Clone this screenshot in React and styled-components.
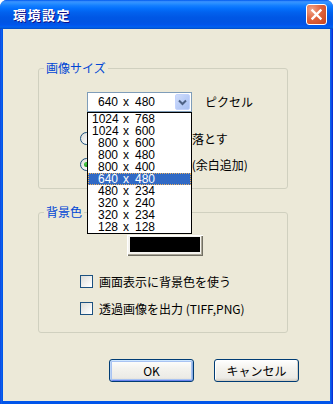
import React from 'react'
import styled, { createGlobalStyle } from 'styled-components'

const GlobalStyle = createGlobalStyle`
  html, body {
    margin: 0;
    padding: 0;
    background: #ffffff;
  }
  body {
    font-family: 'Noto Sans CJK JP', 'Liberation Sans', sans-serif;
    font-size: 12px;
  }
`

const sizes = [
  ['1024', '768'],
  ['1024', '600'],
  ['800', '600'],
  ['800', '480'],
  ['800', '400'],
  ['640', '480'],
  ['480', '234'],
  ['320', '240'],
  ['320', '234'],
  ['128', '128'],
]

const App = () => {
  return (
    <>
      <GlobalStyle />
      <Window>
        <TitleBar>
          <Title>環境設定</Title>
          <CloseButton>
            <svg width="13" height="13" viewBox="0 0 13 13">
              <path d="M2.5 2.5 L10.5 10.5 M10.5 2.5 L2.5 10.5" stroke="#fff" strokeWidth="2.4" strokeLinecap="square" />
            </svg>
          </CloseButton>
        </TitleBar>
        <Client>
          <Group>
            <Legend>画像サイズ</Legend>
            <GroupBody $top={18} $bottom={17}>
              <ComboRow>
                <ComboWrap>
                  <Combo>
                    <SizeText>
                      <Num1>640</Num1><Times>x</Times><Num2>480</Num2>
                    </SizeText>
                    <ArrowButton>
                      <svg width="9" height="7" viewBox="0 0 9 7">
                        <path d="M1 1.5 L4.5 5 L8 1.5" stroke="#4D6185" strokeWidth="2" fill="none" />
                      </svg>
                    </ArrowButton>
                  </Combo>
                  <DropList>
                    {sizes.map(([w, h], i) => (
                      <DropItem key={i} $selected={i === 5}>
                        <Num1>{w}</Num1><Times>x</Times><Num2>{h}</Num2>
                      </DropItem>
                    ))}
                  </DropList>
                </ComboWrap>
                <Unit>ピクセル</Unit>
              </ComboRow>
              <OptionRow $mt={20} $gap={3}>
                <Radio />
                <OptionLabel>余分な部分を切り落とす</OptionLabel>
              </OptionRow>
              <OptionRow $mt={13} $gap={3}>
                <Radio $checked />
                <OptionLabel>縮小して全体表示(余白追加)</OptionLabel>
              </OptionRow>
            </GroupBody>
          </Group>

          <Group $mt={17}>
            <Legend>背景色</Legend>
            <GroupBody $top={17} $bottom={17}>
              <SwatchRow>
                <Swatch>
                  <SwatchColor $color="#000000" />
                </Swatch>
              </SwatchRow>
              <OptionRow $mt={19} $gap={6}>
                <Check />
                <OptionLabel>画面表示に背景色を使う</OptionLabel>
              </OptionRow>
              <OptionRow $mt={14} $gap={6}>
                <Check />
                <OptionLabel>透過画像を出力 (TIFF,PNG)</OptionLabel>
              </OptionRow>
            </GroupBody>
          </Group>

          <ButtonRow>
            <PushButton $default>OK</PushButton>
            <PushButton>キャンセル</PushButton>
          </ButtonRow>
        </Client>
      </Window>
    </>
  )
}

const Window = styled.div`
  width: 333px;
  height: 404px;
  box-sizing: border-box;
  display: flex;
  flex-direction: column;
  border-radius: 7px 7px 0 0;
  overflow: hidden;
  background: linear-gradient(to right, #0831D9 0px, #166AEE 1px, #0055EA 2px, #0055EA 330px, #166AEE 331px, #0831D9 332px);
`

const TitleBar = styled.div`
  height: 29px;
  flex-shrink: 0;
  display: flex;
  align-items: center;
  padding: 0 6px 0 13px;
  background: linear-gradient(to bottom,
    #0058EE 0%, #3A93FF 6%, #288EFF 12%, #127DFF 20%, #036FFC 30%,
    #0262EE 42%, #0057E5 60%, #0054E3 76%, #0055EB 86%,
    #005BF5 90%, #0262E8 94%, #0049C8 100%);
`

const Title = styled.div`
  flex: 1;
  color: #ffffff;
  font-weight: 700;
  font-size: 13px;
  line-height: 14px;
  letter-spacing: 1.5px;
  text-shadow: 1px 1px #0F1089;
`

const CloseButton = styled.div`
  width: 21px;
  height: 21px;
  box-sizing: border-box;
  border: 1px solid #ffffff;
  border-radius: 3px;
  display: flex;
  align-items: center;
  justify-content: center;
  background: radial-gradient(circle at 25% 25%, #F0A58A 0%, #E0643E 45%, #C8431B 100%);
`

const Client = styled.div`
  flex: 1;
  margin: 0 3px 3px 3px;
  background: #ECE9D8;
  padding-top: 33px;
  display: flex;
  flex-direction: column;
`

const Group = styled.fieldset`
  margin: ${p => p.$mt || 0}px 0 0 35px;
  width: 250px;
  box-sizing: border-box;
  padding: 0;
  border: 1px solid #D0D0BF;
  border-radius: 3px;
  min-width: 0;
`

const Legend = styled.legend`
  margin-left: 5px;
  padding: 0 2px;
  color: #0046D5;
  font-size: 12px;
  line-height: 12px;
`

const GroupBody = styled.div`
  padding: ${p => p.$top}px 0 ${p => p.$bottom}px 41px;
  display: flex;
  flex-direction: column;
`

const ComboRow = styled.div`
  display: flex;
  align-items: center;
  margin-left: 7px;
  gap: 13px;
`

const ComboWrap = styled.div`
  position: relative;
  width: 105px;
  height: 20px;
`

const Combo = styled.div`
  width: 105px;
  height: 20px;
  box-sizing: border-box;
  border: 1px solid #7F9DB9;
  background: #ffffff;
  display: flex;
  align-items: center;
`

const SizeText = styled.div`
  flex: 1;
  display: flex;
  padding-left: 4px;
  font-family: 'Liberation Sans', 'Noto Sans CJK JP', sans-serif;
  font-size: 12px;
  line-height: 12px;
  color: #000000;
`

const Num1 = styled.span`
  display: inline-block;
  width: 26px;
  text-align: right;
`

const Times = styled.span`
  display: inline-block;
  width: 16px;
  text-align: center;
`

const Num2 = styled.span`
  display: inline-block;
  width: 21px;
  text-align: right;
`

const ArrowButton = styled.div`
  width: 15px;
  height: 16px;
  margin-right: 1px;
  box-sizing: border-box;
  border: 1px solid #C3D3FD;
  border-radius: 2px;
  background: linear-gradient(135deg, #D0DDFB 0%, #BACDF7 50%, #A9C0F3 100%);
  display: flex;
  align-items: center;
  justify-content: center;
`

const DropList = styled.div`
  position: absolute;
  left: 0;
  top: 100%;
  z-index: 10;
  width: 105px;
  box-sizing: border-box;
  border: 1px solid #000000;
  background: #ffffff;
  display: flex;
  flex-direction: column;
`

const DropItem = styled.div`
  height: 12px;
  box-sizing: border-box;
  display: flex;
  padding-left: 4px;
  font-family: 'Liberation Sans', 'Noto Sans CJK JP', sans-serif;
  font-size: 12px;
  line-height: 12px;
  color: ${p => (p.$selected ? '#ffffff' : '#000000')};
  background: ${p => (p.$selected ? '#316AC5' : '#ffffff')};
  outline: ${p => (p.$selected ? '1px dotted #E8B060' : 'none')};
  outline-offset: -1px;
`

const Unit = styled.div`
  font-size: 12px;
  line-height: 12px;
  color: #000000;
`

const OptionRow = styled.div`
  display: flex;
  align-items: center;
  height: 13px;
  margin-top: ${p => p.$mt}px;
  gap: ${p => p.$gap}px;
`

const OptionLabel = styled.span`
  font-size: 12px;
  line-height: 13px;
  color: #000000;
  white-space: nowrap;
`

const Radio = styled.span`
  position: relative;
  width: 13px;
  height: 13px;
  box-sizing: border-box;
  border: 1px solid #1C5180;
  border-radius: 50%;
  background: linear-gradient(135deg, #DCDCD7 0%, #ffffff 90%);
  flex-shrink: 0;

  &::after {
    content: '';
    display: ${p => (p.$checked ? 'block' : 'none')};
    position: absolute;
    left: 3px;
    top: 3px;
    width: 5px;
    height: 5px;
    border-radius: 50%;
    background: radial-gradient(circle at 35% 35%, #55D051 0%, #21A121 60%, #1A7F1A 100%);
  }
`

const Check = styled.span`
  width: 13px;
  height: 13px;
  box-sizing: border-box;
  border: 1px solid #1C5180;
  background: linear-gradient(135deg, #DCDCD7 0%, #ffffff 90%);
  flex-shrink: 0;
`

const SwatchRow = styled.div`
  display: flex;
  padding-left: 47px;
`

const Swatch = styled.div`
  width: 76px;
  height: 21px;
  box-sizing: border-box;
  padding: 2px 3px 4px 3px;
  background: #F4F3EE;
  box-shadow: inset 1px 1px #ffffff, inset -1px -1px #716F64, inset -2px -2px #ACA899;
`

const SwatchColor = styled.div`
  width: 100%;
  height: 100%;
  background: ${p => p.$color};
`

const ButtonRow = styled.div`
  display: flex;
  justify-content: flex-end;
  gap: 20px;
  margin-top: 26px;
  padding-right: 31px;
`

const PushButton = styled.div`
  width: 85px;
  height: 23px;
  box-sizing: border-box;
  border: 1px solid #003C74;
  border-radius: 3px;
  display: flex;
  align-items: center;
  justify-content: center;
  font-size: 12px;
  line-height: 12px;
  color: #000000;
  background: linear-gradient(to bottom, #ffffff 0%, #F4F3EE 40%, #ECEBE6 85%, #D6D0C5 100%);
  box-shadow: ${p => (p.$default
    ? 'inset 0 1px #CEE7FF, inset 1px 0 #BCD4F6, inset -1px 0 #89ADE4, inset 0 -1px #6982EE, inset 0 0 0 2px #A9C3F2'
    : 'inset -1px -1px #D6D0C5, inset 1px 1px #ffffff')};
`

export default App
